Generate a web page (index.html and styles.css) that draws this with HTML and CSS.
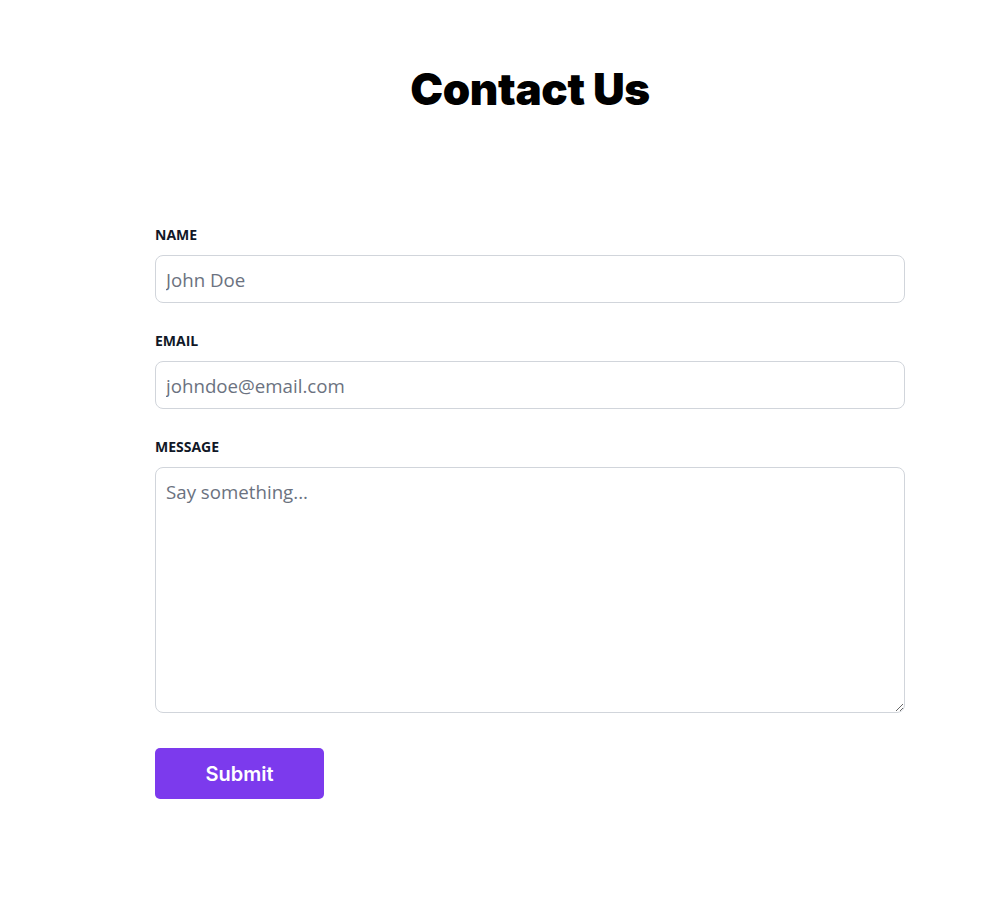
FILE: index.html
```html
<!DOCTYPE html>
<html lang="en">
<head>
<meta charset="utf-8">
<title>Contact Us</title>
<link rel="stylesheet" href="styles.css">
</head>
<body>
<main class="page">
  <h1 class="title">Contact Us</h1>
  <form class="form">
    <div class="field">
      <label class="label" for="name">Name</label>
      <input class="input" id="name" type="text" placeholder="John Doe">
    </div>
    <div class="field">
      <label class="label" for="email">Email</label>
      <input class="input" id="email" type="email" placeholder="johndoe@email.com">
    </div>
    <div class="field">
      <label class="label" for="message">Message</label>
      <textarea class="input textarea" id="message" placeholder="Say something..."></textarea>
    </div>
    <button class="submit" type="button">Submit</button>
  </form>
</main>
</body>
</html>
```
FILE: styles.css
```css
* { box-sizing: border-box; }
html, body { margin: 0; padding: 0; background: #ffffff; }
body { font-family: "Open Sans", "Noto Sans", sans-serif; color: #111827; }
.page {
  padding: 62px 0 0 55px;
  display: flex;
  flex-direction: column;
  align-items: center;
}
.title {
  margin: 0;
  font-family: Inter, "Noto Sans", sans-serif;
  font-weight: 900;
  font-size: 44px;
  line-height: 54px;
  letter-spacing: -0.4px;
  color: #000;
}
.form {
  width: 750px;
  margin-top: 109px;
  display: flex;
  flex-direction: column;
  gap: 28px;
}
.field { display: flex; flex-direction: column; gap: 11px; }
.label {
  font-size: 14px;
  font-weight: 700;
  line-height: 19px;
  text-transform: uppercase;
  color: #111827;
}
.input {
  width: 100%;
  height: 48px;
  border: 1px solid #d1d5db;
  border-radius: 8px;
  padding: 0 10px;
  font-family: "Open Sans", "Noto Sans", sans-serif;
  font-size: 18.7px;
  color: #111827;
  background: #fff;
  outline: none;
}
.input::placeholder { color: #6b7280; }
.textarea {
  height: 246px;
  padding: 11px 10px;
  line-height: 25px;
  resize: vertical;
}
.submit {
  margin-top: 7px;
  width: 169px;
  height: 51px;
  border: none;
  border-radius: 5px;
  background: #7c3aed;
  color: #fff;
  font-family: Inter, "Noto Sans", sans-serif;
  font-weight: 600;
  font-size: 20px;
  cursor: pointer;
}
```
